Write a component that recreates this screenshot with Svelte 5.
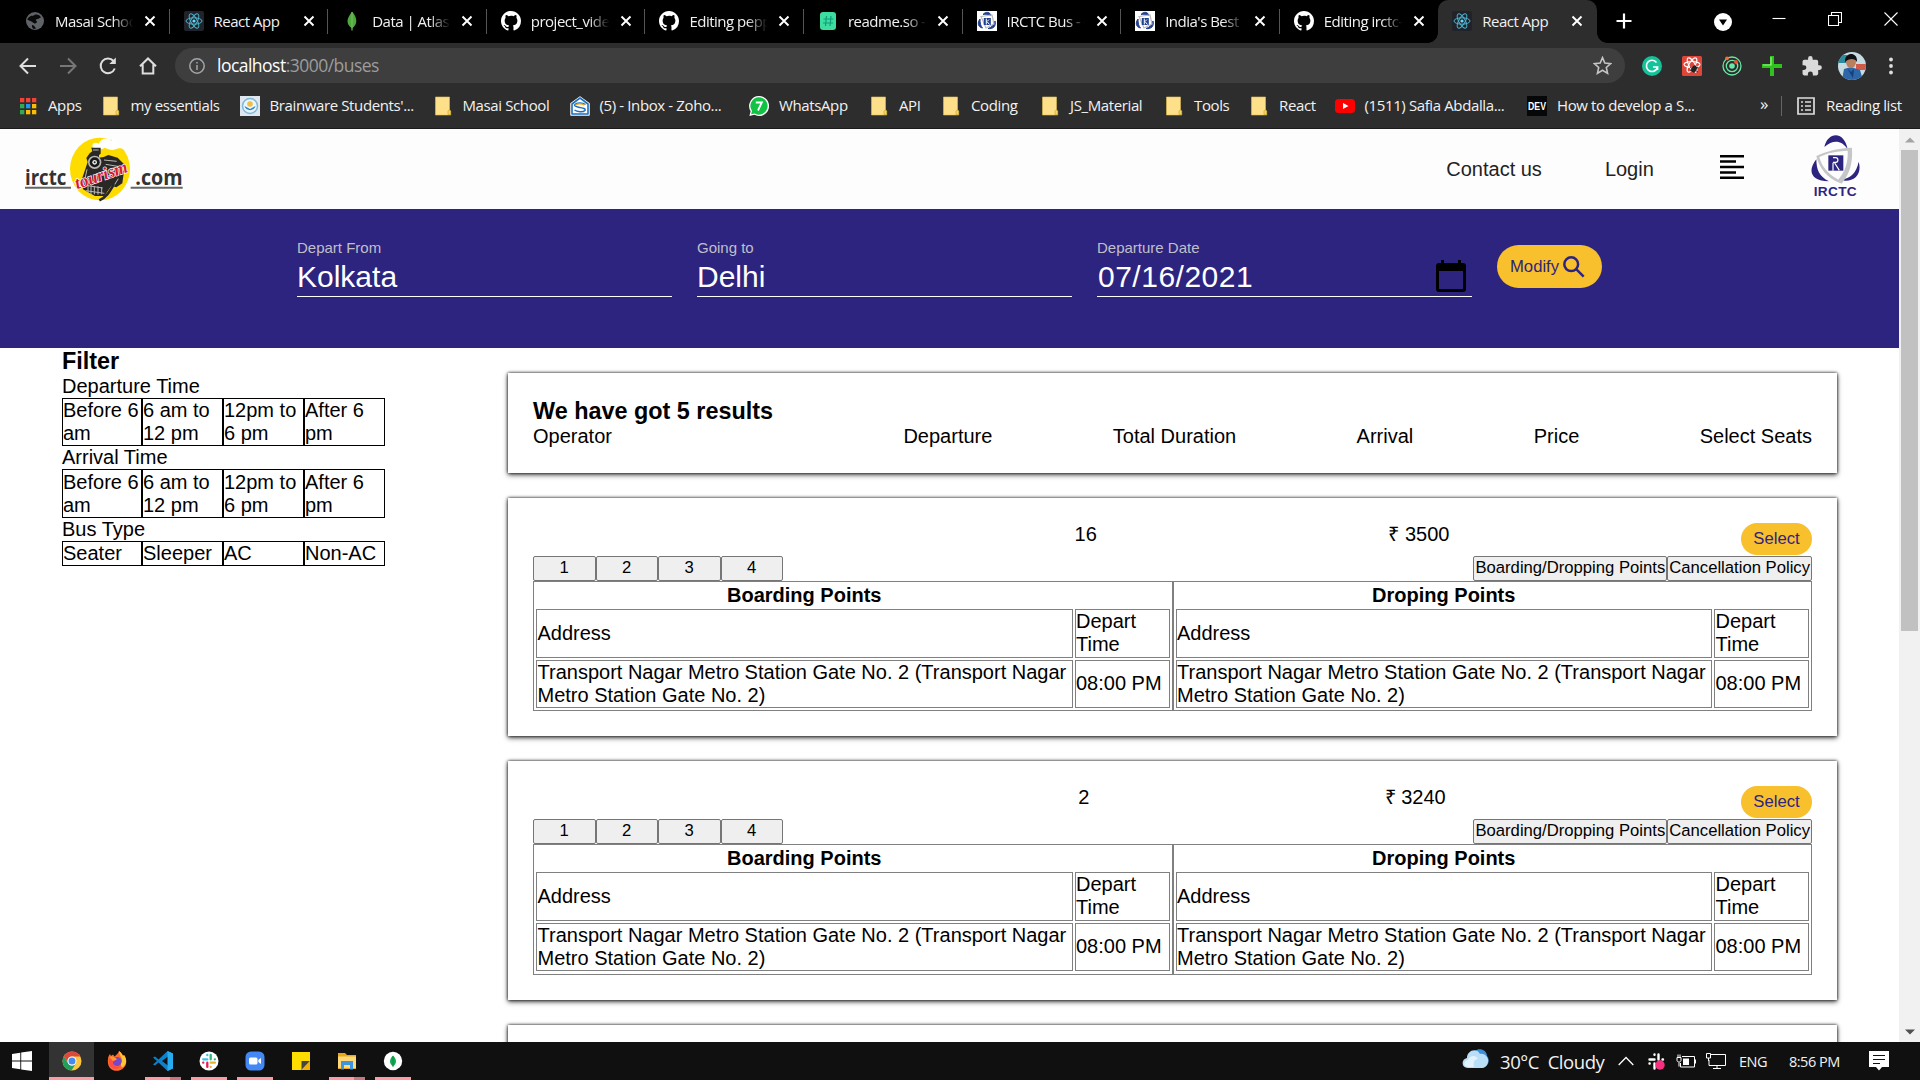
<script>
  const tabs = [
    { icon: 'globe', title: 'Masai School' },
    { icon: 'react', title: 'React App' },
    { icon: 'leaf', title: 'Data | Atlas: Mo' },
    { icon: 'github', title: 'project_videos' },
    { icon: 'github', title: 'Editing pepper' },
    { icon: 'readme', title: 'readme.so - E' },
    { icon: 'irctc', title: 'IRCTC Bus - O' },
    { icon: 'irctc', title: "India's Best B" },
    { icon: 'github', title: 'Editing irctc-c' },
    { icon: 'react', title: 'React App', active: true }
  ];
  const bookmarks = [
    ['apps', 'Apps'],
    ['folder', 'my essentials'],
    ['brain', "Brainware Students'..."],
    ['folder', 'Masai School'],
    ['zoho', '(5) - Inbox - Zoho...'],
    ['whatsapp', 'WhatsApp'],
    ['folder', 'API'],
    ['folder', 'Coding'],
    ['folder', 'JS_Material'],
    ['folder', 'Tools'],
    ['folder', 'React'],
    ['youtube', '(1511) Safia Abdalla...'],
    ['dev', 'How to develop a S...']
  ];
  const extensions = ['grammarly', 'bug', 'rings', 'plus', 'puzzle'];
  const times = ['Before 6 am', '6 am to 12 pm', '12pm to 6 pm', 'After 6 pm'];
  const filters = [
    { title: 'Departure Time', options: times },
    { title: 'Arrival Time', options: times },
    { title: 'Bus Type', options: ['Seater', 'Sleeper', 'AC', 'Non-AC'] }
  ];
  const headings = ['Operator', 'Departure', 'Total Duration', 'Arrival', 'Price', 'Select Seats'];
  const buses = [
    { duration: 16, price: 3500 },
    { duration: 2, price: 3240 },
    { duration: 12, price: 2800 }
  ];
  const stop = 'Transport Nagar Metro Station Gate No. 2 (Transport Nagar Metro Station Gate No. 2)';
  const tasks = [
    { icon: 'chrome', state: 'current' },
    { icon: 'firefox', state: '' },
    { icon: 'vscode', state: 'open multi' },
    { icon: 'slack', state: 'open' },
    { icon: 'zoom', state: 'open' },
    { icon: 'sticky', state: '' },
    { icon: 'explorer', state: 'open multi' },
    { icon: 'mongo', state: 'open' }
  ];
</script>

{#snippet icon(name)}
  <svg class="icon" viewBox="0 0 20 20" aria-hidden="true">
    {#if name === 'globe'}
      <circle cx="10" cy="10" r="9" fill="#5f6368" />
      <path d="M10 3.500c3-.5 5 .8 6 3-1.500 0-2 1.500-3.500 1.500S10 9 11.500 10s-1 3-2 2.500S7 10.500 4 9.500 3 7 5 5.500 8 6 10 3.500zM7 14c2 0 3 2 4 3.500l-2 .5c-1.500-.5-2.500-2-2-4z" fill="#0a0a0a" />
    {:else if name === 'react'}
      <rect width="20" height="20" rx="2" fill="#20232a" />
      <g fill="none" stroke="#4fb3cf" stroke-width="1"><ellipse cx="10" cy="10" rx="8" ry="3.200" /><ellipse cx="10" cy="10" rx="8" ry="3.200" transform="rotate(60 10 10)" /><ellipse cx="10" cy="10" rx="8" ry="3.200" transform="rotate(120 10 10)" /></g>
      <circle cx="10" cy="10" r="1.600" fill="#61dafb" />
    {:else if name === 'leaf'}
      <path d="M10 .5c3 3.500 4.500 6.500 4.300 10-.2 3-1.800 5-3.800 6.500L10.300 20h-.6l-.2-3C7.300 15.500 5.700 13.500 5.500 10.500 5.400 7 7.500 4.500 10 .5z" fill="#4fa83d" /><path d="M10 1v18" stroke="#8ac976" stroke-width=".7" />
    {:else if name === 'github'}
      <path transform="scale(1.25)" d="M8 0C3.580 0 0 3.580 0 8c0 3.540 2.290 6.530 5.470 7.590.4.070.55-.17.55-.38 0-.19-.01-.82-.01-1.490-2.010.37-2.530-.49-2.690-.94-.09-.23-.48-.94-.82-1.130-.28-.15-.68-.52-.01-.53.63-.01 1.080.58 1.230.82.72 1.210 1.870.87 2.330.66.070-.52.28-.87.51-1.070-1.780-.2-3.640-.89-3.640-3.950 0-.87.31-1.590.82-2.150-.08-.2-.36-1.020.08-2.120 0 0 .67-.21 2.200.82A7.600 7.600 0 0 1 8 3.860c.68 0 1.360.09 2 .27 1.530-1.040 2.200-.82 2.200-.82.44 1.100.16 1.920.08 2.120.51.56.82 1.270.82 2.150 0 3.070-1.870 3.750-3.650 3.950.29.25.54.73.54 1.480 0 1.070-.01 1.930-.01 2.200 0 .21.15.46.55.38A8.010 8.010 0 0 0 16 8c0-4.420-3.580-8-8-8z" fill="#fff" />
    {:else if name === 'readme'}
      <rect x="2" y="1" width="16" height="18" rx="3" fill="#3ddc9f" /><path d="M8.500 5l-1 10M13 5l-1 10M5.500 8h10M5 12h10" stroke="#0f9f78" stroke-width="1.200" />
    {:else if name === 'irctc'}
      <rect width="20" height="20" fill="#fff" /><path d="M6 3.500C9 0 13 1 14 4.500 11.500 3 8.500 3 6 3.500zM3 8C0 12 1 16 5.500 17 3.500 15 3 12 3 8zM18 10c1.500 5-2 8.500-7 7.500 4-1 6-4 7-7.500z" fill="#213f8f" stroke="#213f8f" /><path d="M4 5.500L15 4l2 9-8 4z" fill="none" stroke="#bbb" stroke-width="1.200" /><rect x="6.800" y="7" width="7" height="7" fill="#213f8f" /><path d="M9.300 7.500v6M9.500 10l3 3.500M12 8.500l-1.500 1.500" stroke="#fff" />
    {:else if name === 'apps'}
      {#each ['#f44336', '#f44336', '#f44336', '#34a853', '#2196f3', '#fbbc05', '#34a853', '#fbbc05', '#fbbc05'] as c, i}
        <rect x={2 + (i % 3) * 6} y={2 + Math.floor(i / 3) * 6} width="4.300" height="4.300" fill={c} />
      {/each}
    {:else if name === 'folder'}
      <path d="M2.500 1h14v13l1.200 1v4H2.500z" fill="#ffe08a" stroke="#e3bf4f" stroke-width=".6" /><path d="M15 18.500v-3.200c0-1.500 2.500-1.500 2.500 0v3.200z" fill="#f5d36d" stroke="#c59f22" stroke-width=".6" />
    {:else if name === 'brain'}
      <rect width="20" height="20" fill="#dfe8ee" /><circle cx="10" cy="10" r="7.500" fill="#e9f5fa" stroke="#7fb8d8" stroke-width="1.500" /><circle cx="10" cy="8" r="2.800" fill="#efbd40" /><path d="M4.500 10c1 5.500 10 5.500 11 0L10 13z" fill="#2f87c2" />
    {:else if name === 'zoho'}
      <path d="M1 7.500L10 1l9 6.500V19H1z" fill="#fff" stroke="#fff" stroke-width="1.500" stroke-linejoin="round" /><path d="M2 8l8-6 8 6v10H2z" fill="#fff" stroke="#1d6fbd" stroke-width="1.600" stroke-linejoin="round" /><path d="M15.500 8.500c-3-2-9-2-11 .5 0 1.500 3 2 5.500 2.500s6 1 5 3c-2 2-8 1.500-10.500-.5" fill="none" stroke="#1d6fbd" stroke-width="1.500" /><path d="M5.500 9.200c2-1.700 6-1.700 9 0" fill="none" stroke="#f1ae22" stroke-width="1.400" />
    {:else if name === 'whatsapp'}
      <path d="M10 0a10 10 0 1 1-4.700 18.800L.4 20l1.200-4.800A10 10 0 0 1 10 0z" fill="#fff" /><path d="M10 1.300a8.700 8.700 0 1 1-4.500 16.200L2.100 18.300 3 15A8.700 8.700 0 0 1 10 1.300z" fill="#12c245" /><path d="M6.800 6.500h6L9 14.500" fill="none" stroke="#fff" stroke-width="1.800" />
    {:else if name === 'youtube'}
      <rect y="3" width="20" height="14" rx="3.500" fill="#f00" /><path d="M8 7l5.500 3L8 13z" fill="#fff" />
    {:else if name === 'dev'}
      <rect width="20" height="20" fill="#050708" /><text x="10" y="14.300" class="devtext" text-anchor="middle" textLength="18" lengthAdjust="spacingAndGlyphs">DEV</text>
    {:else if name === 'grammarly'}
      <circle cx="10" cy="10" r="10" fill="#15c39a" /><path d="M14.500 6.500A5.600 5.600 0 1 0 15.500 11h-4.500M15.500 11v3" fill="none" stroke="#fff" stroke-width="1.700" />
    {:else if name === 'bug'}
      <rect width="20" height="20" rx="1.500" fill="#e0453a" /><g fill="none" stroke="#fff" stroke-width="1.100"><ellipse cx="10" cy="8.500" rx="8" ry="3" /><ellipse cx="10" cy="9" rx="8" ry="3" transform="rotate(60 10 9)" /><ellipse cx="10" cy="9" rx="8" ry="3" transform="rotate(120 10 9)" /></g><ellipse cx="12" cy="13" rx="2.600" ry="3.600" fill="#222" transform="rotate(30 12 13)" /><path d="M8 11l8 5M8 15l8-4M12 17l1-8" stroke="#222" stroke-width=".9" />
    {:else if name === 'rings'}
      <g fill="none" stroke="#67e8a5" stroke-width="1.300"><circle cx="10" cy="10" r="9" /><circle cx="10" cy="10" r="5.700" /></g><circle cx="10" cy="10" r="2.800" fill="#67e8a5" /><circle cx="5" cy="2.300" r="1.900" fill="#f4702b" /><circle cx="14" cy="6" r="1.900" fill="#f4502b" />
    {:else if name === 'plus'}
      <path d="M8 0h4v8h8v4h-8v8H8v-8H0V8h8z" fill="#2fc31d" /><path d="M9 1v8H1" fill="none" stroke="#9bf58a" stroke-width="1.200" />
    {:else if name === 'puzzle'}
      <path transform="translate(-1.300 -.8) scale(.92)" d="M20.500 11H19V7c0-1.100-.9-2-2-2h-4V3.500a2.500 2.500 0 0 0-5 0V5H4c-1.100 0-2 .9-2 2v3.800h1.500a2.700 2.700 0 0 1 0 5.400H2V20c0 1.100.9 2 2 2h3.800v-1.500a2.700 2.700 0 0 1 5.400 0V22H17c1.100 0 2-.9 2-2v-4h1.500a2.500 2.500 0 0 0 0-5z" fill="#dadada" />
    {:else if name === 'chrome'}
      <circle cx="10" cy="10" r="9.500" fill="#fbc740" /><path d="M1.800 5.200A9.500 9.500 0 0 1 18.300 5.500H10A4.500 4.500 0 0 0 6 12.300z" fill="#dc4a3d" /><path d="M1.800 5.200A9.500 9.500 0 0 0 9.500 19.500L14 12.200A4.500 4.500 0 0 1 6 12.200z" fill="#1fa15d" /><circle cx="10" cy="10" r="4.500" fill="#fff" /><circle cx="10" cy="10" r="3.500" fill="#4688f4" />
    {:else if name === 'firefox'}
      <path d="M1 8c0-2 1-4 2-5l1 2 2-1.500 1.500 2C9 4 11 3 12 0c3 2 3.500 4 4 5l1-1c3 4 3 9 0 12.500-3.500 4-10 4.500-13.500 1C1 15 .5 11 1 8z" fill="#ff6a2a" /><path d="M12 0c3 2 3.500 4 4 5l1-1c3 4 3 9-1 12-2 1-3-3-1-6 1-3-3-5-3-10z" fill="#ffc633" /><circle cx="10" cy="10.500" r="4.600" fill="#7847c8" /><path d="M2 8c3-2 5 0 8 0-1 2-4 1-4 4s4 5 8 2c-1 4-8 6-11 1-1-2-1.500-5-1-7z" fill="#ff4e45" /><path d="M2.500 6C5 4.500 7 6 10 8c-1 1.500-3 1-4 2z" fill="#ff9c2c" />
    {:else if name === 'vscode'}
      <path d="M14.500 0L20 2.500v15L14.500 20 5.500 11.500 2 14.500 0 13.500 4 10 0 6.500l2-1 3.500 3zM15 5.500L9 10l6 4.500z" fill="#0d80ca" fill-rule="evenodd" /><path d="M14.500 0L20 2.500v15L14.500 20z" fill="#27acf0" />
    {:else if name === 'slack'}
      <circle cx="10" cy="10" r="9.500" fill="#fff" /><g stroke-width="2.300" stroke-linecap="round"><path d="M8.300 4v.2M4.200 8.300h4.100" stroke="#36c5f0" /><path d="M11.700 4v4.300M15.800 8.300h.1" stroke="#2eb67d" /><path d="M11.700 11.700h4.200M11.700 15.800v.1" stroke="#ecb22e" /><path d="M4.200 11.700h.1M8.300 11.700v4.200" stroke="#e01e5a" /></g>
    {:else if name === 'zoom'}
      <rect x=".5" y=".5" width="19" height="19" rx="5.500" fill="#4388f5" /><rect x="4" y="6.500" width="8.500" height="7" rx="1.500" fill="#fff" /><path d="M13.300 9L16 7v6l-2.700-2z" fill="#fff" />
    {:else if name === 'sticky'}
      <path d="M1 1h18v18H1z" fill="#ffdc00" /><path d="M10.500 10H19l-8.500 9z" fill="#454545" /><path d="M19 10v9h-8.500z" fill="#f3b200" />
    {:else if name === 'explorer'}
      <path d="M1 2h7l2 2h9v14H1z" fill="#e9a81c" /><path d="M1 5.500h18V17H1z" fill="#ffd977" /><path d="M4 18.500V10h12v8.500h-3V14H7v4.500z" fill="#3f95dc" />
    {:else if name === 'mongo'}
      <circle cx="10" cy="10" r="9.200" fill="#fff" /><path d="M10 4.500c4 4 4 8 0 11-4-3-4-7 0-11z" fill="#13aa52" /><path d="M10 5v11" stroke="#0a7c3b" stroke-width=".6" />
    {/if}
  </svg>
{/snippet}

{#snippet points(title)}
  <div class="points">
    <strong>{title}</strong>
    <div class="cell">Address</div>
    <div class="cell time">Depart Time</div>
    <div class="cell">{stop}</div>
    <div class="cell time">08:00 PM</div>
  </div>
{/snippet}

<div class="screen">
  <div class="tabstrip">
    {#each tabs as tab, i}
      <div class="tab" class:active={tab.active} class:quiet={i === 8}>
        {@render icon(tab.icon)}
        <span class="title">{tab.title}</span>
        <svg class="close" viewBox="0 0 12 12"><path d="M1.500 1.500l9 9m0-9l-9 9" /></svg>
      </div>
    {/each}
    <svg class="newtab" viewBox="0 0 16 16"><path d="M8 .5v15M.5 8h15" /></svg>
    <div class="window">
      <svg class="media" viewBox="0 0 18 18"><circle cx="9" cy="9" r="9" fill="#fff" /><path d="M5 6.500h8L9 12.500z" fill="#000" /></svg>
      <svg class="ctl" viewBox="0 0 14 14"><path d="M.5 6.500h13" /></svg>
      <svg class="ctl" viewBox="0 0 14 14"><path d="M.5 3.500h10v10H.5zM3.500 3V.5h10v10H11" /></svg>
      <svg class="ctl" viewBox="0 0 14 14"><path d="M.5.5l13 13m0-13l-13 13" /></svg>
    </div>
  </div>

  <div class="toolbar">
    <svg class="nav" viewBox="0 0 20 20"><path d="M18 10H3M10 2.500L2.500 10l7.500 7.500" /></svg>
    <svg class="nav dim" viewBox="0 0 20 20"><path d="M2 10h15M10 2.500l7.500 7.500-7.500 7.500" /></svg>
    <svg class="nav" viewBox="0 0 20 20"><path d="M16.800 12.500A7.300 7.300 0 1 1 15.500 5" /><path class="solid" d="M17.800 1.500V8h-6.500z" /></svg>
    <svg class="nav" viewBox="0 0 20 20"><path d="M2 10.200L10 2.500l8 7.700M4.700 8.500v9h10.600v-9" /></svg>
    <div class="address">
      <svg class="info" viewBox="0 0 16 16"><circle cx="8" cy="8" r="7.200" /><path d="M8 7v5M8 4v1.600" /></svg>
      <span class="url">localhost<span>:3000/buses</span></span>
      <svg class="star" viewBox="0 0 18 18"><path d="M9 1.500l2.200 5.200 5.600.5-4.200 3.700 1.200 5.500L9 13.500l-4.800 2.900 1.200-5.500L1.200 7.200l5.600-.5z" /></svg>
    </div>
    <div class="ext">
      {#each extensions as e}{@render icon(e)}{/each}
      <svg class="avatar" viewBox="0 0 28 28">
        <defs><clipPath id="face"><circle cx="14" cy="14" r="14" /></clipPath></defs>
        <g clip-path="url(#face)"><path d="M0 0h28v28H0z" fill="#c6dce2" /><path d="M0 3h9v8H0z" fill="#2e8a9d" /><path d="M18 12h10v6H18z" fill="#d05a48" /><path d="M4 28L6 17l7-2 9 3 3 10z" fill="#2e66aa" /><ellipse cx="13" cy="10" rx="5" ry="6" fill="#b9805f" /><path d="M7 10C6 0 20-1 19 10c-2-4-8-4-12 0z" fill="#111" /><path d="M9 16l4 4 3-3-1 9z" fill="#163e78" /></g>
      </svg>
      <svg class="dots" viewBox="0 0 4 18"><circle cx="2" cy="2.500" r="1.900" /><circle cx="2" cy="9" r="1.900" /><circle cx="2" cy="15.500" r="1.900" /></svg>
    </div>
  </div>

  <div class="bookmarks">
    {#each bookmarks as [ic, label]}
      <div class="bookmark">{@render icon(ic)}<span>{label}</span></div>
    {/each}
    <div class="more">»</div>
    <div class="reading">
      <svg viewBox="0 0 18 18"><path d="M1 1h16v16H1z" /><path d="M4 5h2M8 5h6M4 9h2M8 9h6M4 13h2M8 13h6" /></svg>
      <span>Reading list</span>
    </div>
  </div>

  <div class="viewport">
    <main>
      <header>
        <svg class="logo" viewBox="0 0 540 225">
          <ellipse cx="255" cy="111" rx="90" ry="94" fill="#ffdc00" />
          <path d="M233 45c-4-14 12-15 18-10 7-18 29-20 38-9 14-9 20 2 18 8 16 1 21 13 22 19-13-4-14-6-27-1-14 6-23-2-32-5-13 6-23 8-37-2z" fill="#fff" />
          <path d="M229 47h28v18l-5 4v8l14-2 14-6 28 8 18 18-4 14 5 9-5 36-18 12-15-5-21 31h-28l-22-12-14-8-4-30 4-10 14-42-4-12 10-14 8-6z" fill="#292827" />
          <circle cx="239" cy="91" r="20" fill="#b9b7b2" /><circle cx="239" cy="91" r="15" fill="#181818" /><circle cx="239" cy="91" r="7" fill="#eee" /><circle cx="239" cy="91" r="3" fill="#222" />
          <path d="M234 54h17M267 84l38 4M272 97l48 8M216 112l-10 46M310 140l-25 40M218 161l45 7M212 176l56 8M219 158v25M228 160v27M238 162v25M249 163v25M260 165v22" stroke="#bbb9b4" stroke-width="3" />
          <path d="M297 156c-12 20-20 37-44 49" stroke="#292827" stroke-width="8" fill="none" />
          <text x="30" y="159" class="word" textLength="124" lengthAdjust="spacingAndGlyphs">irctc</text>
          <text x="361" y="159" class="word" textLength="142" lengthAdjust="spacingAndGlyphs">.com</text>
          <text x="186" y="172" class="tour" textLength="164" lengthAdjust="spacingAndGlyphs" transform="rotate(-19 186 172)">tourism</text>
          <path d="M30 167h138M347 167h156" stroke="#666" stroke-width="6" />
        </svg>
        <nav>
          <span>Contact us</span>
          <span>Login</span>
          <svg class="align" viewBox="0 0 24 24"><path d="M0 1.300h24M0 6.500h16M0 12h24M0 17.500h16M0 22.700h24" /></svg>
          <svg class="emblem" viewBox="60 10 155 195">
            <path d="M103 52C111 10 160 -2 173 58 155 32 130 28 103 52zM79 89c-28 35-16 66 38 66C88 141 79 121 79 89zM206 96c12 40-18 66-58 54 34-2 51-20 58-54z" fill="#2d2480" />
            <path d="M79 79c27-13 61-23 107-25v9c-45 0-75 7-98 19 7 28 26 51 54 66l8 12C112 146 87 115 79 79zM173 59h13c2 35-4 72-31 103l-14-8c26-26 34-58 32-95z" fill="#c4c6c7" />
            <path d="M115 77h45v46h-45z" fill="#2d2480" /><path d="M129 84h8c9 0 9 14 0 14h-8M134 100l14 22M129 99v24" stroke="#fff" stroke-width="3.500" fill="none" />
            <text x="71" y="198" class="name" textLength="129">IRCTC</text>
          </svg>
        </nav>
      </header>

      <section class="search">
        <div class="field"><label for="from">Depart From</label><div class="value" id="from">Kolkata</div></div>
        <div class="field"><label for="to">Going to</label><div class="value" id="to">Delhi</div></div>
        <div class="field">
          <label for="date">Departure Date</label>
          <div class="value date" id="date">07/16/2021
            <svg viewBox="0 0 30 32"><path d="M5 0h3v3h14V0h3v3h2a3 3 0 0 1 3 3v23a3 3 0 0 1-3 3H3a3 3 0 0 1-3-3V6a3 3 0 0 1 3-3h2zM3 11v18h24V11z" fill="#000" fill-rule="evenodd" /></svg>
          </div>
        </div>
        <button class="modify">Modify
          <svg viewBox="0 0 22 22"><circle cx="8.200" cy="8.200" r="6.900" /><path d="M13.200 13.200l7.500 7.500" /></svg>
        </button>
      </section>

      <div class="content">
        <aside>
          <h3>Filter</h3>
          {#each filters as f}
            <p>{f.title}</p>
            <div class="options">
              {#each f.options as o}<div>{o}</div>{/each}
            </div>
          {/each}
        </aside>
        <div class="results">
          <div class="card">
            <h3>We have got 5 results</h3>
            <div class="heads">{#each headings as h}<span>{h}</span>{/each}</div>
          </div>
          {#each buses as bus}
            <div class="card">
              <div class="trip">
                <span class="operator"></span>
                <span>{bus.duration}</span>
                <span>₹ {bus.price}</span>
                <button class="select">Select</button>
              </div>
              <div class="actions">
                <div class="pages">{#each [1, 2, 3, 4] as n}<button>{n}</button>{/each}</div>
                <div class="links"><button>Boarding/Dropping Points</button><button>Cancellation Policy</button></div>
              </div>
              <div class="tables">
                {@render points('Boarding Points')}
                {@render points('Droping Points')}
              </div>
            </div>
          {/each}
        </div>
      </div>
    </main>
    <div class="scrollbar">
      <svg viewBox="0 0 21 21"><path d="M6 13.500h10l-5-5z" fill="#a3a3a3" /></svg>
      <div class="thumb"></div>
      <svg class="down" viewBox="0 0 21 21"><path d="M6 8.500h10l-5 5z" fill="#505050" /></svg>
    </div>
  </div>

  <footer class="taskbar">
    <div class="start"><svg viewBox="0 0 20 20"><path d="M0 3l8.300-1.200v7.700H0zM9.200 1.600L20 0v9.500H9.200zM0 10.500h8.300v7.700L0 17zM9.200 10.500H20V20L9.200 18.400z" fill="#fff" /></svg></div>
    {#each tasks as t}
      <div class="task {t.state}">{@render icon(t.icon)}</div>
    {/each}
    <div class="tray">
      <svg class="cloud" viewBox="0 0 27 20"><path d="M13 2c4-4 12-1 12 5 3 3 2 10-3 11H10z" fill="#3f8fd8" /><path d="M6 19C-1 19-1 10 5 9 5 2 14-2 18 5c5-1 9 4 8 8-1 4-3 6-7 6z" fill="#b9def7" /><path d="M6 18c-5 0-5-6 0-7 2-5 8-5 10-1-4 0-5 4-4 8z" fill="#e3f3fd" /></svg>
      <span class="weather">30°C&nbsp; Cloudy</span>
      <svg class="chev" viewBox="0 0 16 10"><path d="M.7 9L8 1.500 15.300 9" /></svg>
      <svg class="tslack" viewBox="0 0 17 17"><path d="M6.500 1.500v.2M1.500 6.500h5M10.500 1.500v5M14.500 6.500h.5M1.500 10.500h.2M6.500 10.500v5" stroke="#fff" stroke-width="2.400" stroke-linecap="round" /><circle cx="12" cy="12" r="4.700" fill="#f5317f" /></svg>
      <svg class="battery" viewBox="0 0 20 14"><path d="M6 2.500h12.500v10.500h-14V9M19.500 5.500v4M1 3.500h4v3c0 2-4 2-4 0zM2 .5v3M4 .5v3M3 8.500v4" fill="none" stroke="#fff" /><path d="M7 4.500h6v6.500H7z" fill="#fff" /></svg>
      <svg class="net" viewBox="0 0 20 17"><path d="M5 1.500h14.500v11H3V7M7 15.500h8M11 13v3M.5.500h4v4.500h-4zM2.500 5v3" fill="none" stroke="#fff" /></svg>
      <span class="lang">ENG</span>
      <span class="clock">8:56 PM</span>
      <svg class="note" viewBox="0 0 20 20"><path d="M0 0h20v16h-7l-3 3.500L7 16H0z" fill="#fff" /><path d="M4 4.500h12M4 8.500h12M4 12.500h7" stroke="#101010" stroke-width="1.200" /></svg>
    </div>
  </footer>
</div>

<style>
  :global(body) { margin: 0; background: #fff; overflow: hidden; }
  .screen { width: 1920px; height: 1080px; display: flex; flex-direction: column; overflow: hidden; font-family: 'Liberation Sans', Arial, sans-serif; font-size: 20px; line-height: 23px; color: #000; }
  .screen *, .screen { box-sizing: border-box; }
  svg { display: block; flex: none; }
  .icon { width: 20px; height: 20px; }
  button { font-family: inherit; margin: 0; }

  .tabstrip, .toolbar, .bookmarks, .taskbar { font-family: 'Open Sans', 'Noto Sans', sans-serif; flex: none; }
  .tabstrip { height: 43px; background: #000; display: flex; align-items: center; padding-left: 11px; color: #f1f1f1; font-size: 15px; letter-spacing: -0.5px; }
  .tab { width: 158.600px; height: 43px; display: flex; align-items: center; padding: 0 0 1px 14px; flex: none; background: linear-gradient(#555, #555) right 9px / 1px 25px no-repeat; }
  .tab.quiet { background: none; }
  .tab.active { background: #2d2d2d; border-radius: 10px 10px 0 0; position: relative; }
  .tab.active::before, .tab.active::after { content: ''; position: absolute; bottom: 0; width: 10px; height: 10px; }
  .tab.active::before { left: -10px; background: radial-gradient(circle at 0 0, #000 9.500px, #2d2d2d 10px); }
  .tab.active::after { right: -10px; background: radial-gradient(circle at 100% 0, #000 9.500px, #2d2d2d 10px); }
  .title { width: 80px; margin: 0 9px 0 10px; white-space: nowrap; overflow: hidden; mask-image: linear-gradient(90deg, #000 72%, transparent 98%); }
  .tab:nth-child(2) .title, .tab.active .title { mask-image: none; }
  .close { width: 12px; height: 12px; stroke: #fff; stroke-width: 1.900; }
  .newtab { width: 16px; height: 16px; stroke: #fff; stroke-width: 2.200; margin: -1px 0 0 19px; }
  .window { display: flex; align-items: center; margin-left: auto; padding-right: 22px; }
  .media { width: 18px; height: 18px; margin-right: 40px; }
  .ctl { width: 14px; height: 14px; fill: none; stroke: #fff; stroke-width: 1.100; margin: -5px 0 0 42px; }
  .media + .ctl { margin-left: 0; }

  .toolbar { height: 46px; background: #2d2d2d; display: flex; align-items: center; padding: 0 0 1px 18px; }
  .nav { width: 20px; height: 20px; margin-right: 20px; fill: none; stroke: #dedede; stroke-width: 2; }
  .nav .solid { fill: #dedede; stroke: none; }
  .nav.dim { stroke: #777; }
  .address { width: 1450px; height: 35px; border-radius: 18px; background: #3e3e3e; display: flex; align-items: center; padding: 0 13px 0 14px; margin-left: -3px; }
  .info { width: 16px; height: 16px; fill: none; stroke: #a3a6a9; stroke-width: 1.500; }
  .url { margin-left: 12px; font-size: 17.500px; letter-spacing: -0.520px; color: #fff; }
  .url span { color: #9c9c9c; }
  .star { width: 19px; height: 19px; margin-left: auto; fill: none; stroke: #c5c5c5; stroke-width: 1.500; }
  .ext { display: flex; align-items: center; gap: 20px; margin-left: 17px; }
  .avatar { width: 28px; height: 28px; margin-left: -4px; }
  .dots { width: 4px; height: 18px; fill: #dedede; margin-left: 3px; }

  .bookmarks { height: 40px; background: #2d2d2d; border-bottom: 1px solid #1b1b1b; display: grid; grid-template-columns: 82.500px 139px 193px 137px 179.500px 120px 72px 99px 124px 85px 85.500px 192.500px 233px 26px 1fr; padding: 0 0 6px 18px; align-items: center; font-size: 15px; letter-spacing: -0.380px; color: #f2f2f2; }
  .bookmark { display: flex; align-items: center; gap: 10px; white-space: nowrap; }
  .more { font-size: 17px; margin-top: -4px; }
  .devtext { font: 700 11px 'Liberation Sans', sans-serif; letter-spacing: 0; fill: #fff; }
  .reading { display: flex; align-items: center; gap: 11px; padding-left: 15px; height: 20px; border-left: 1px solid #666; margin-left: -5px; white-space: nowrap; }
  .reading svg { width: 18px; height: 18px; fill: none; stroke: #ddd; stroke-width: 1.700; }

  .viewport { height: 913px; flex: none; display: flex; overflow: hidden; }
  main { width: 1899px; height: 913px; overflow: hidden; flex: none; }
  header { height: 80px; background: #fdfdfd; display: flex; justify-content: space-between; padding: 3px 37px 0 15px; }
  .logo { width: 180px; height: 75px; }
  .word { font: 700 66px 'Open Sans', sans-serif; fill: #333; }
  .tour { font: italic 700 52px 'Liberation Serif', serif; fill: #d81734; stroke: #fff; stroke-width: 4px; paint-order: stroke; }
  .name { font: 700 41px 'Liberation Sans', sans-serif; fill: #2d2480; }
  nav { display: flex; align-items: flex-start; color: #222; }
  nav span { margin: 26px 63px 0 0; }
  .align { width: 24px; height: 24px; margin: 23px 66.500px 0 3px; stroke: #000; stroke-width: 2.500; }
  .emblem { width: 51.700px; height: 65px; margin-top: 1px; }

  .search { height: 139px; background: #2d2480; display: flex; gap: 25px; padding: 29px 0 0 297px; }
  .field { width: 375px; height: 59px; border-bottom: 1px solid #fff; }
  .field label { display: block; font-size: 15px; line-height: 20px; color: #c0bfc9; }
  .value { font-size: 30px; line-height: 38px; color: #fff; }
  .date { display: flex; justify-content: space-between; padding: 0 6px 0 1px; letter-spacing: 0.500px; }
  .date svg { width: 30px; height: 32px; margin-top: 2px; }
  .modify { width: 105px; height: 43px; border: 0; border-radius: 22px; background: #f8c02c; color: #2d2480; font-size: 16.667px; display: flex; align-items: center; padding: 0 0 0 13px; gap: 4px; margin-top: 7px; }
  .modify svg { width: 22px; height: 22px; fill: none; stroke: #2d2480; stroke-width: 2.500; }

  .content { display: flex; align-items: flex-start; }
  aside { width: 323px; margin-left: 62px; }
  h3 { font-size: 23.400px; line-height: 27px; margin: 0; }
  p { margin: 0; }
  .options { display: grid; grid-template-columns: 80px 81px 81px 81px; }
  .options div { border: 1px solid #000; }
  .options:nth-of-type(2) { height: 49px; }
  .options:nth-of-type(2) div { padding-top: 1px; }
  .results { width: 1329px; margin: 25px 0 0 123px; }
  .card { padding: 25px; margin-bottom: 25px; box-shadow: 0 2px 5px rgba(0, 0, 0, .65), 0 0 3px rgba(0, 0, 0, .9); }
  .heads, .trip { display: flex; justify-content: space-between; }
  .heads span:first-child, .operator { width: 250px; }
  .trip { height: 33px; }
  .select { width: 71px; height: 32px; border: 0; border-radius: 16px; background: #f8c02c; color: #2d2480; font-size: 16.667px; padding: 0; }
  .actions { display: flex; justify-content: space-between; height: 25px; }
  .actions button { height: 25px; border: 1px solid #767676; border-radius: 2px; background: #efefef; font-size: 16.667px; line-height: 20px; padding: 0 1px 2px; color: #000; white-space: nowrap; }
  .pages, .links { display: flex; }
  .pages button { width: 62.500px; }
  .tables { display: grid; grid-template-columns: 1fr 1fr; height: 130.300px; }
  .points { border: 1px solid #808080; padding: 2px; display: grid; grid-template-columns: 1fr 95px; grid-template-rows: 23px 49px 48px; gap: 2px; align-content: start; }
  .points strong { grid-column: 1; justify-self: center; }
  .points strong + .cell { grid-column: 1; }
  .cell { border: 1px solid #808080; display: flex; align-items: center; padding: 0 0.500px; }
  .cell.time { padding-bottom: 2px; }

  .scrollbar { width: 21px; background: #f1f1f1; display: flex; flex-direction: column; }
  .scrollbar svg { width: 21px; height: 21px; }
  .thumb { height: 481px; margin: 0 2px; background: #c1c1c1; }
  .scrollbar .down { margin-top: auto; }

  .taskbar { height: 38px; background: #101010; display: flex; }
  .start { width: 49px; padding: 9px 0 0 12px; }
  .start svg { width: 20px; height: 20px; }
  .task { width: 36px; height: 38px; margin: 0 5px; padding-top: 9px; display: flex; justify-content: center; align-items: flex-start; }
  .task.current { width: 45px; margin: 0; background: #333; border-bottom: 3px solid #ff99a4; }
  .task.open { border-bottom: 3px solid #ff99a4; }
  .task.multi { border-image: linear-gradient(90deg, #ff99a4 68%, #c9747e 68%) 1; border-width: 0 0 3px; }
  .tray { margin-left: auto; display: flex; align-items: center; color: #f2f2f2; font-size: 15px; padding-right: 31px; white-space: nowrap; }
  .cloud { width: 27px; height: 20px; margin-top: -4px; }
  .weather { width: 106px; margin-left: 11px; font-size: 18.500px; letter-spacing: -0.450px; }
  .chev { width: 16px; height: 10px; margin-left: 12px; fill: none; stroke: #fff; stroke-width: 1.300; }
  .tslack { width: 17px; height: 17px; margin-left: 14px; }
  .battery { width: 20px; height: 14px; margin-left: 11px; }
  .net { width: 20px; height: 17px; margin-left: 10px; }
  .lang { width: 32px; margin-left: 13px; font-size: 14.500px; letter-spacing: -0.500px; }
  .clock { width: 56px; margin-left: 18px; font-size: 14.500px; letter-spacing: -0.500px; }
  .note { width: 20px; height: 20px; margin-left: 24px; }
</style>
